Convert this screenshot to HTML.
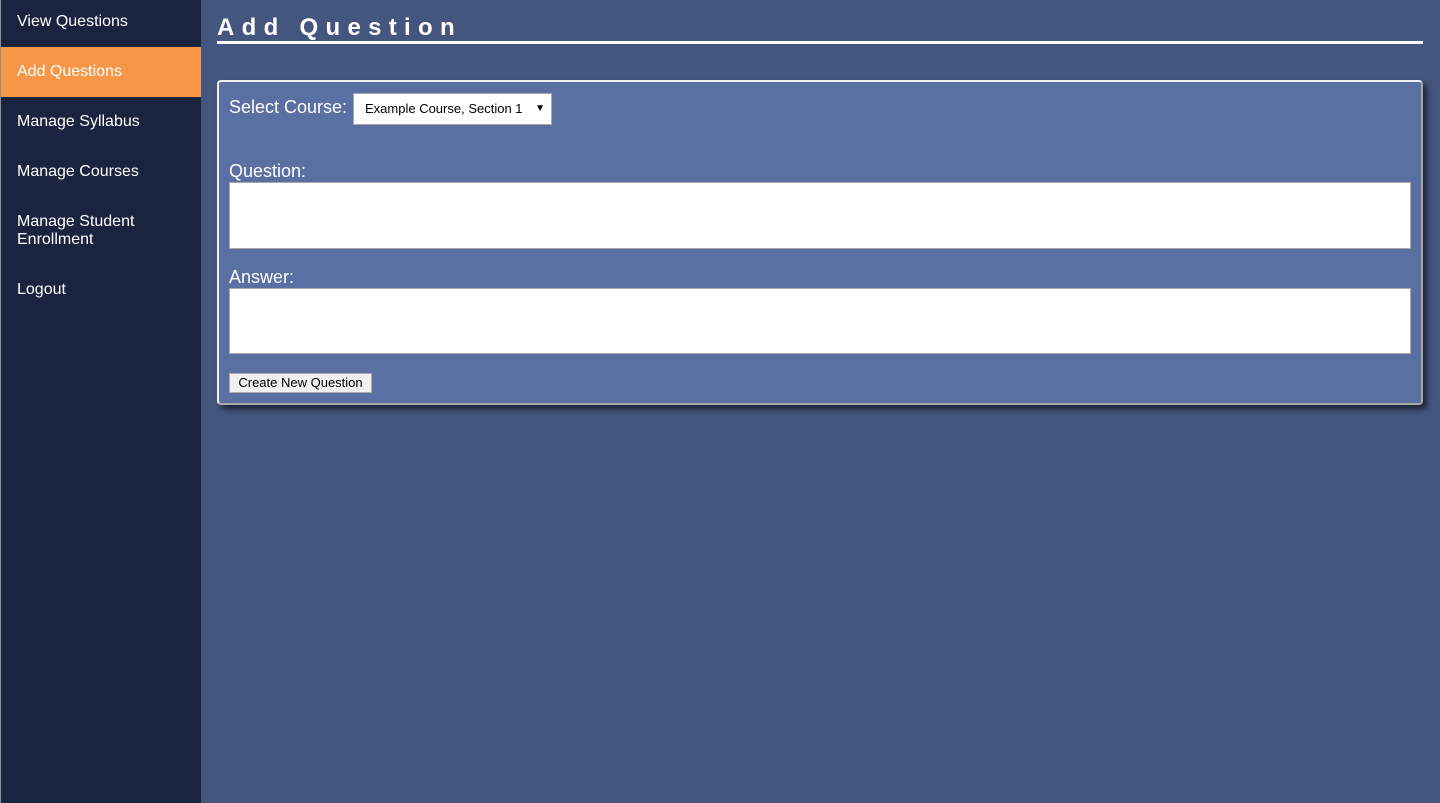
<!DOCTYPE html>
<html><head><style>
body{margin:0;width:1440px;height:803px;background:#44567e;font-family:"Liberation Sans",Arial,sans-serif;overflow:hidden;position:relative}
.side{position:absolute;left:0;top:0;width:201px;height:803px;background:#1b243e;border-left:1px solid #8a8f99;box-sizing:border-box;padding-top:0}
.inner{margin-top:-3px}
.side .inner div{color:#fff;font-size:16px;padding:0 16px;height:50px;display:flex;align-items:center;line-height:18px}
.side .inner .act{background:#f79646}
.side .inner .two{height:68px}
h1{position:absolute;left:217px;top:12px;margin:0;width:1206px;color:#fff;font-size:24px;font-weight:bold;letter-spacing:7.3px;border-bottom:3px solid #fff;height:29px;line-height:31px}
.panel{position:absolute;left:217px;top:80px;width:1206px;height:325px;box-sizing:border-box;background:#5a70a2;border:2px solid;border-color:#f2f2f2 #a8a8a8 #a8a8a8 #f2f2f2;border-radius:4px;box-shadow:4px 4px 6px rgba(0,0,0,.6)}
.lbl{position:absolute;color:#fff;font-size:18px}
.sel{position:absolute;left:134px;top:11px;width:199px;height:32px;background:#fff;border:1px solid #a9a9a9;box-sizing:border-box;font-size:13px;line-height:30px;padding-left:11px}
.sel span{position:absolute;right:6px;font-size:10px}
.ta{position:absolute;left:10px;width:1182px;background:#fff;border:1px solid #a9a9a9;box-sizing:border-box}
.btn{position:absolute;left:10px;top:291px;width:143px;height:20px;box-sizing:border-box;background:#f0f0f0;border:1px solid #adadad;font-size:13px;text-align:center;line-height:18px}
</style></head><body>
<div class="side"><div class="inner">
<div>View Questions</div>
<div class="act">Add Questions</div>
<div>Manage Syllabus</div>
<div>Manage Courses</div>
<div class="two">Manage Student<br>Enrollment</div>
<div>Logout</div>
</div></div>
<h1>Add Question</h1>
<div class="panel">
<div class="lbl" style="left:10px;top:15px">Select Course:</div>
<div class="sel">Example Course, Section 1<span>▼</span></div>
<div class="lbl" style="left:10px;top:79px">Question:</div>
<div class="ta" style="top:100px;height:67px"></div>
<div class="lbl" style="left:10px;top:185px">Answer:</div>
<div class="ta" style="top:206px;height:66px"></div>
<div class="btn">Create New Question</div>
</div>
</body></html>
